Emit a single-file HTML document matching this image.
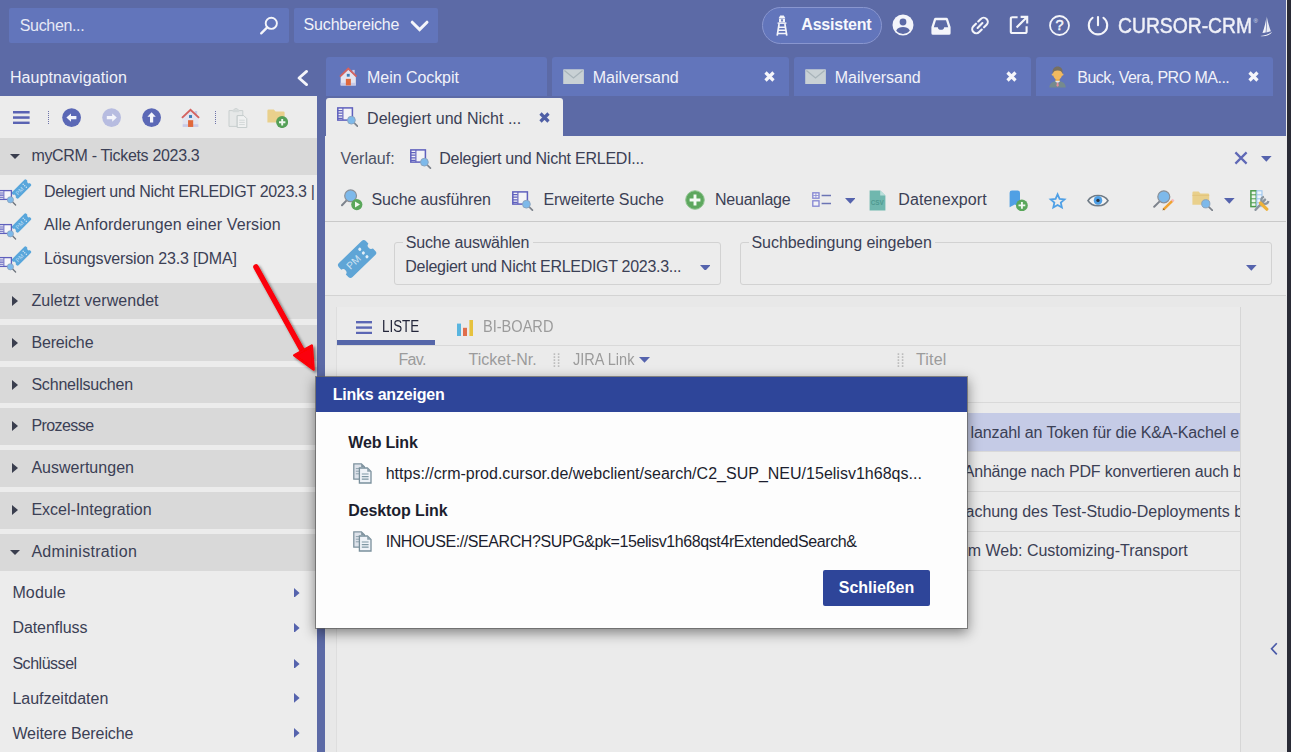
<!DOCTYPE html>
<html lang="de">
<head>
<meta charset="utf-8">
<title>CURSOR-CRM</title>
<style>
*{box-sizing:border-box;margin:0;padding:0}
html,body{width:1291px;height:752px;overflow:hidden}
body{position:relative;background:#5c6aa6;font-family:"Liberation Sans",sans-serif;font-size:16px;color:#3b4055}
.abs{position:absolute}
.t{position:absolute;white-space:nowrap;line-height:20px;height:20px}
.box{position:absolute;background:#6275bb;border-radius:2px}
.tab{position:absolute;top:57px;height:39px;background:#6275bb;border-radius:3px 3px 0 0}
#side{position:absolute;left:0;top:96px;width:317px;height:656px;background:#ececec}
.sh{position:absolute;left:0;width:317px;height:36.5px;background:#d9d9d9}
.tr{position:absolute;left:12.4px;width:0;height:0;border-left:6.2px solid #3a3e4e;border-top:5px solid transparent;border-bottom:5px solid transparent}
.td{position:absolute;left:9.6px;width:0;height:0;border-top:5.6px solid #3a3e4e;border-left:5px solid transparent;border-right:5px solid transparent}
.ar{position:absolute;left:294.2px;width:0;height:0;border-left:5.4px solid #5664ae;border-top:4.9px solid transparent;border-bottom:4.9px solid transparent}
#main{position:absolute;left:325px;top:136px;width:962px;height:616px;background:#ececec}
#lower{position:absolute;left:325px;top:296px;width:962px;height:456px;background:#e8e8e8}
#acttab{position:absolute;left:326px;top:98px;width:237px;height:39px;background:#ececec;border-radius:3px 3px 0 0}
.sep{position:absolute;left:325px;width:961px;height:1px;background:#c9c9c9}
.fs{position:absolute;border:1px solid #d2d2d2;border-radius:3px;top:242px;height:43px}
.lgbg{position:absolute;top:240px;height:6px;background:#ececec}
#list{position:absolute;left:336px;top:307px;width:905px;height:445px;background:#ebebeb;border-left:1px solid #dedede;border-right:1px solid #d6d6d6}
.hl{position:absolute;left:337px;width:903px;height:1px;background:#d9d9d9}
#dlg{position:absolute;left:316px;top:377px;width:651px;height:251px;background:#fdfdfd;box-shadow:0 0 0 1px rgba(95,95,95,.7),0 4px 12px 1px rgba(0,0,0,.45)}
#dlgh{position:absolute;left:316px;top:377px;width:651px;height:34.5px;background:#2e4599}
#btn{position:absolute;left:823px;top:569.5px;width:107px;height:36.5px;background:#2e4599;border-radius:2px}
</style>
</head>
<body>
<div class="box" style="left:9px;top:8px;width:280px;height:35px"></div>
<div class="t" style="left:19.8px;top:16px;font-size:16px;letter-spacing:-0.345px;color:#e6e9f6;">Suchen...</div>
<svg class="abs" style="left:259px;top:15px;" width="21" height="21" viewBox="0 0 21 21"><circle cx="12.3" cy="8.3" r="5.6" fill="none" stroke="#f4f5fa" stroke-width="1.9"/><path d="M8.2 12.4 L2.2 18.4" stroke="#f4f5fa" stroke-width="2.3" stroke-linecap="round"/></svg>
<div class="box" style="left:294px;top:8px;width:143.5px;height:35px"></div>
<div class="t" style="left:303.6px;top:15px;font-size:16px;letter-spacing:-0.179px;color:#f1f2f9;">Suchbereiche</div>
<svg class="abs" style="left:409px;top:18.6px;" width="21" height="14" viewBox="0 0 21 14"><path d="M3.2 3.2 L10.6 10.6 L18 3.2" fill="none" stroke="#f4f5fa" stroke-width="3" stroke-linecap="round" stroke-linejoin="miter"/></svg>
<div class="abs" style="left:762px;top:7px;width:120px;height:37px;border-radius:18.5px;background:#6275bb;border:1px solid #8996cf"></div>
<svg class="abs" style="left:774.6px;top:15.2px;" width="14" height="21" viewBox="0 0 14 21"><path d="M5.2 0.6 h3.6 l1.6 2.6 h-6.8z" fill="#f4f5fa"/><rect x="4" y="3.6" width="6" height="3.6" fill="#f4f5fa"/><rect x="2.6" y="7.4" width="8.8" height="1.5" fill="#f4f5fa"/><path d="M4.1 9 L2.2 20.6 M9.9 9 L11.8 20.6" stroke="#f4f5fa" stroke-width="1.7" fill="none"/><path d="M3.6 12.2 h6.8 M3.1 15.3 h7.8 M2.6 18.4 h8.8" stroke="#f4f5fa" stroke-width="1.5"/><rect x="6.1" y="4.3" width="1.8" height="2.2" fill="#6275bb"/></svg>
<div class="t" style="left:801.3px;top:15px;font-size:16px;letter-spacing:-0.203px;font-weight:bold;color:#f7f8fd;">Assistent</div>
<svg class="abs" style="left:891.5px;top:14.4px;" width="22" height="22" viewBox="0 0 22 22"><circle cx="11" cy="11" r="10.5" fill="#f4f5fa"/><circle cx="11" cy="8" r="3.4" fill="#5c6aa6"/><path d="M4.2 16.6 C5.6 13.6 8.2 12.9 11 12.9 C13.8 12.9 16.4 13.6 17.8 16.6 C16.2 18.7 13.8 19.9 11 19.9 C8.2 19.9 5.8 18.7 4.2 16.6z" fill="#5c6aa6"/></svg>
<svg class="abs" style="left:930.6px;top:16.6px;" width="20" height="19" viewBox="0 0 20 19"><path d="M4.6 0.8 h10.8 q1.2 0 1.6 1.1 l2.6 8.1 v6.2 q0 1.6 -1.6 1.6 h-16 q-1.6 0 -1.6 -1.6 v-6.2 l2.6 -8.1 q0.4 -1.1 1.6 -1.1z" fill="#f4f5fa"/><path d="M5 3.2 h10 l2.2 7 h-4 q-0.4 2.6 -3.2 2.6 q-2.8 0 -3.2 -2.6 h-4z" fill="#5c6aa6"/></svg>
<svg class="abs" style="left:970.3px;top:16px;" width="20" height="19" viewBox="0 0 20 19"><g transform="rotate(-45 10 9.5)" fill="none" stroke="#f4f5fa" stroke-width="2.1" stroke-linecap="round"><path d="M8.4 5.4 h-3.6 a4.1 4.1 0 0 0 0 8.2 h3.6"/><path d="M11.6 5.4 h3.6 a4.1 4.1 0 0 1 0 8.2 h-3.6"/><path d="M6.6 9.5 h6.8"/></g></svg>
<svg class="abs" style="left:1009.2px;top:15.2px;" width="21" height="21" viewBox="0 0 21 21"><path d="M8.6 2.2 h-5.2 q-1.6 0 -1.6 1.6 v12.6 q0 1.6 1.6 1.6 h12.6 q1.6 0 1.6 -1.6 v-5.2" fill="none" stroke="#f4f5fa" stroke-width="2.1"/><path d="M11.6 1.9 h6.6 v6.6 M17.8 2.3 L7.6 12.5" fill="none" stroke="#f4f5fa" stroke-width="2.1"/></svg>
<svg class="abs" style="left:1047.9px;top:14px;" width="23" height="23" viewBox="0 0 23 23"><circle cx="11.5" cy="11.5" r="9.5" fill="none" stroke="#f4f5fa" stroke-width="1.8"/><text x="11.5" y="16.4" text-anchor="middle" font-family="Liberation Sans, sans-serif" font-size="14.5" stroke="#f4f5fa" stroke-width="0.5" fill="#f4f5fa">?</text></svg>
<svg class="abs" style="left:1086.5px;top:13.8px;" width="22" height="23" viewBox="0 0 22 23"><path d="M5.59 3.76 A9.2 9.2 0 1 0 16.41 3.76" fill="none" stroke="#f4f5fa" stroke-width="2.1" stroke-linecap="round"/><path d="M11 3 V11.2" stroke="#f4f5fa" stroke-width="2.1" stroke-linecap="round"/></svg>
<div class="t" style="left:1118.0px;top:16px;font-size:21.6px;transform-origin:0 50%;transform:scaleX(0.8943);color:#f0f1f8;-webkit-text-stroke:0.45px #f0f1f8;">CURSOR-CRM</div>
<div class="t" style="left:1253.6px;top:14.5px;font-size:6px;color:#dfe2f1;line-height:12px;height:12px">®</div>
<svg class="abs" style="left:1260.2px;top:15.7px;" width="13" height="21.4" viewBox="0 0 13 21.4"><path d="M6.5 0.3 C5.8 6 4.6 11.4 2.5 16.9 L5.7 16.5 C6.1 11 6.4 5.6 6.5 0.3z" fill="#f4f5fa"/><path d="M6.9 1.2 C8 6.6 9.4 11.2 10.9 15.3 L6.4 16.4 C6.7 11 6.9 6.6 6.9 1.2z" fill="#f4f5fa" opacity="0.93"/><path d="M0.3 20.1 C4.6 19.5 9 18.1 12.3 15.7 C10.2 19.4 4.8 20.9 0.3 20.1z" fill="#f4f5fa"/></svg>
<div class="abs" style="left:1286px;top:0;width:1px;height:752px;background:#ececec"></div>
<div class="abs" style="left:1287px;top:0;width:4px;height:752px;background:#2a2b36"></div>
<div class="t" style="left:9.9px;top:68px;font-size:16px;letter-spacing:0.091px;color:#f1f2f9;">Hauptnavigation</div>
<svg class="abs" style="left:294px;top:68px;" width="17" height="20" viewBox="0 0 17 20"><path d="M12.6 3.4 L5 10 L12.6 16.6" fill="none" stroke="#f4f5fa" stroke-width="2.8" stroke-linecap="round" stroke-linejoin="round"/></svg>
<div class="tab" style="left:326px;width:221px"></div>
<div class="tab" style="left:552px;width:237px"></div>
<div class="tab" style="left:794px;width:237px"></div>
<div class="tab" style="left:1036px;width:237px"></div>
<svg class="abs" style="left:338.6px;top:67.0px;" width="18.72" height="20.28" viewBox="0 0 18 19.5"><rect x="12.8" y="2.8" width="2.3" height="4.4" fill="#c5c8e6"/><path d="M8.9 2.4 L1.6 9.2 V17.7 H16.2 V9.2z" fill="#e3e4f0"/><rect x="1.6" y="15.2" width="14.6" height="2.5" fill="#c8cae7"/><rect x="6.6" y="11.4" width="4.8" height="6.3" fill="#e0683c"/><rect x="7.5" y="6.6" width="2.8" height="2.7" fill="#3b7db8"/><path d="M0.9 9.2 L8.9 1.6 L16.9 9.2" fill="none" stroke="#d4625f" stroke-width="1.8" stroke-linejoin="miter"/></svg>
<div class="t" style="left:367.1px;top:68px;font-size:16px;letter-spacing:-0.065px;color:#f1f2f9;">Mein Cockpit</div>
<svg class="abs" style="left:563px;top:68.6px;" width="21.2" height="15.8" viewBox="0 0 21.2 15.8"><rect x="0.2" y="0.3" width="20.7" height="15.2" rx="0.6" fill="#c9d1d5"/><path d="M1.4 1.4 L10.5 9 L19.6 1.4" fill="none" stroke="#a8b4ba" stroke-width="1.3"/></svg>
<div class="t" style="left:592.8px;top:68px;font-size:16px;letter-spacing:-0.042px;color:#f1f2f9;">Mailversand</div>
<svg class="abs" style="left:764px;top:70.9px;" width="11" height="11" viewBox="0 0 11 11"><path d="M1.5 1.5 L9.5 9.5 M9.5 1.5 L1.5 9.5" stroke="#f6f6fa" stroke-width="3.2"/></svg>
<svg class="abs" style="left:805px;top:68.6px;" width="21.2" height="15.8" viewBox="0 0 21.2 15.8"><rect x="0.2" y="0.3" width="20.7" height="15.2" rx="0.6" fill="#c9d1d5"/><path d="M1.4 1.4 L10.5 9 L19.6 1.4" fill="none" stroke="#a8b4ba" stroke-width="1.3"/></svg>
<div class="t" style="left:834.8px;top:68px;font-size:16px;letter-spacing:-0.042px;color:#f1f2f9;">Mailversand</div>
<svg class="abs" style="left:1006px;top:70.9px;" width="11" height="11" viewBox="0 0 11 11"><path d="M1.5 1.5 L9.5 9.5 M9.5 1.5 L1.5 9.5" stroke="#f6f6fa" stroke-width="3.2"/></svg>
<svg class="abs" style="left:1049px;top:66.0px;" width="17.2" height="21.6" viewBox="0 0 17.2 21.6"><path d="M0.4 21.4 C0.6 17.4 3 15.9 6.2 15.2 L8.6 17 L11 15.2 C14.2 15.9 16.6 17.4 16.8 21.4z" fill="#758a8e"/><rect x="6.5" y="11.4" width="4.2" height="4" fill="#eca63a"/><path d="M6.2 15.2 L8.6 17.2 L11 15.2 L10.6 14.7 H6.6z" fill="#e4eaef"/><path d="M7.9 16.4 h1.4 l0.5 3.4 l-1.2 1 l-1.2 -1z" fill="#e48f99"/><circle cx="3.8" cy="8.6" r="1.1" fill="#f1b95f"/><circle cx="13.4" cy="8.6" r="1.1" fill="#f1b95f"/><ellipse cx="8.6" cy="8" rx="4.6" ry="5.5" fill="#f1b95f"/><path d="M3.7 7.6 C3 2.8 5.6 0.5 8.6 0.5 C11.8 0.5 14.2 2.8 13.5 7.6 C12.9 5.6 11.6 4.6 8.6 4.6 C5.8 4.6 4.3 5.6 3.7 7.6z" fill="#78705f"/></svg>
<div class="t" style="left:1077.3px;top:68px;font-size:16px;letter-spacing:-0.510px;color:#f1f2f9;">Buck, Vera, PRO MA...</div>
<svg class="abs" style="left:1248px;top:70.9px;" width="11" height="11" viewBox="0 0 11 11"><path d="M1.5 1.5 L9.5 9.5 M9.5 1.5 L1.5 9.5" stroke="#f6f6fa" stroke-width="3.2"/></svg>
<div id="acttab"></div>
<svg class="abs" style="left:336.6px;top:106.6px;" width="21.5" height="20.5" viewBox="0 0 21.5 20.5"><rect x="0.8" y="0.9" width="14.6" height="12.2" fill="#f3f3f6" stroke="#5f60bd" stroke-width="1.5"/><path d="M0.8 3.6 h4.8 M0.8 6.2 h4.8 M0.8 8.8 h4.8 M0.8 11.4 h4.8" stroke="#5f60bd" stroke-width="1.3"/><path d="M5.9 0.9 v12.2" stroke="#5f60bd" stroke-width="1.1"/><path d="M16.6 15.4 L20.4 19.2" stroke="#7d838c" stroke-width="1.7" stroke-linecap="round"/><circle cx="14.4" cy="13.2" r="3.9" fill="#7db9ea" stroke="#8aa2bb" stroke-width="0.9"/></svg>
<div class="t" style="left:367.1px;top:109px;font-size:16px;letter-spacing:0.015px;">Delegiert und Nicht ...</div>
<svg class="abs" style="left:539.3px;top:112px;" width="11" height="11" viewBox="0 0 11 11"><path d="M1.5 1.5 L9.5 9.5 M9.5 1.5 L1.5 9.5" stroke="#4f5fa5" stroke-width="3.2"/></svg>
<div id="side"></div>
<svg class="abs" style="left:13.1px;top:110.9px;" width="16.6" height="13.1" viewBox="0 0 16.6 13.1"><rect x="0" y="0.00" width="16.6" height="2.5" fill="#5a63b3"/><rect x="0" y="5.30" width="16.6" height="2.5" fill="#5a63b3"/><rect x="0" y="10.60" width="16.6" height="2.5" fill="#5a63b3"/></svg>
<svg class="abs" style="left:48px;top:110.8px;" width="1" height="13.4" viewBox="0 0 1 13.4"><path d="M0.5 0 V13.4" stroke="#6a70a8" stroke-width="1" stroke-dasharray="1 1"/></svg>
<svg class="abs" style="left:62px;top:108.2px;" width="19.2" height="19.2" viewBox="0 0 19.2 19.2"><circle cx="9.6" cy="9.6" r="9.4" fill="#5b68b6"/><path d="M4.4 9.6 L9 5.4 V8 H14.4 V11.2 H9 V13.8z" fill="#f4f5fb"/></svg>
<svg class="abs" style="left:102px;top:108.2px;" width="19.2" height="19.2" viewBox="0 0 19.2 19.2"><circle cx="9.6" cy="9.6" r="9.4" fill="#b7bce0"/><path d="M14.8 9.6 L10.2 5.4 V8 H4.8 V11.2 H10.2 V13.8z" fill="#f4f5fb"/></svg>
<svg class="abs" style="left:142px;top:108.2px;" width="19.2" height="19.2" viewBox="0 0 19.2 19.2"><circle cx="9.6" cy="9.6" r="9.4" fill="#5b68b6"/><path d="M9.6 4.2 L13.8 8.8 H11.2 V14.4 H8 V8.8 H5.4z" fill="#f4f5fb"/></svg>
<svg class="abs" style="left:181px;top:107.8px;" width="19.26" height="20.865000000000002" viewBox="0 0 18 19.5"><rect x="12.8" y="2.8" width="2.3" height="4.4" fill="#c5c8e6"/><path d="M8.9 2.4 L1.6 9.2 V17.7 H16.2 V9.2z" fill="#e3e4f0"/><rect x="1.6" y="15.2" width="14.6" height="2.5" fill="#c8cae7"/><rect x="6.6" y="11.4" width="4.8" height="6.3" fill="#e0683c"/><rect x="7.5" y="6.6" width="2.8" height="2.7" fill="#3b7db8"/><path d="M0.9 9.2 L8.9 1.6 L16.9 9.2" fill="none" stroke="#d4625f" stroke-width="1.8" stroke-linejoin="miter"/></svg>
<svg class="abs" style="left:215px;top:110.8px;" width="1" height="13.4" viewBox="0 0 1 13.4"><path d="M0.5 0 V13.4" stroke="#6a70a8" stroke-width="1" stroke-dasharray="1 1"/></svg>
<svg class="abs" style="left:228.4px;top:107.6px;" width="19.6" height="20.4" viewBox="0 0 19.6 20.4"><path d="M1 2.6 h4.6 q0.4 -2 2.4 -2 q2 0 2.4 2 h4.4 v5 h-5.6 v10.8 h-8.2z" fill="#e6e8e8" stroke="#c9cfcf" stroke-width="1"/><rect x="4.6" y="1.4" width="6.6" height="2.8" rx="0.8" fill="#d5dada"/><path d="M9.2 7.6 h6.6 l3 3 v9 h-9.6z" fill="#f0f1f1" stroke="#c4cbcb" stroke-width="1"/><path d="M11.2 12.2 h5.6 M11.2 14.4 h5.6 M11.2 16.6 h5.6" stroke="#cfd5d5" stroke-width="0.9"/></svg>
<svg class="abs" style="left:267px;top:108.8px;" width="21.2" height="19.2" viewBox="0 0 21.2 19.2"><path d="M0.4 1.8 q0 -1.2 1.2 -1.2 h5.2 l1.8 1.8 h7.8 q1.2 0 1.2 1.2 V13.6 H0.4z" fill="#e9d08c"/><circle cx="15.1" cy="13.1" r="6" fill="#55a058"/><path d="M15.2 10 V16.4 M12 13.2 H18.4" stroke="#f0f8f0" stroke-width="1.9"/></svg>
<div class="sh" style="top:138px;height:37px"></div>
<i class="td" style="top:153.6px"></i>
<div class="t" style="left:31.4px;top:146px;font-size:16px;letter-spacing:-0.325px;">myCRM - Tickets 2023.3</div>
<div class="sh" style="top:283px;height:36px"></div>
<i class="tr" style="top:296.2px"></i>
<div class="t" style="left:31.4px;top:291px;font-size:16px;letter-spacing:0.054px;">Zuletzt verwendet</div>
<div class="sh" style="top:325px;height:36px"></div>
<i class="tr" style="top:338.2px"></i>
<div class="t" style="left:31.4px;top:333px;font-size:16px;letter-spacing:-0.145px;">Bereiche</div>
<div class="sh" style="top:367px;height:36px"></div>
<i class="tr" style="top:380.2px"></i>
<div class="t" style="left:31.4px;top:375px;font-size:16px;letter-spacing:-0.191px;">Schnellsuchen</div>
<div class="sh" style="top:408px;height:37px"></div>
<i class="tr" style="top:421.2px"></i>
<div class="t" style="left:31.4px;top:416px;font-size:16px;letter-spacing:-0.563px;">Prozesse</div>
<div class="sh" style="top:450px;height:37px"></div>
<i class="tr" style="top:463.2px"></i>
<div class="t" style="left:31.4px;top:458px;font-size:16px;letter-spacing:0.025px;">Auswertungen</div>
<div class="sh" style="top:492px;height:37px"></div>
<i class="tr" style="top:505.2px"></i>
<div class="t" style="left:31.4px;top:500px;font-size:16px;letter-spacing:0.008px;">Excel-Integration</div>
<div class="sh" style="top:534px;height:37px"></div>
<i class="td" style="top:549.6px"></i>
<div class="t" style="left:31.4px;top:542px;font-size:16px;letter-spacing:0.309px;">Administration</div>
<svg class="abs" style="left:0px;top:179.2px;" width="33" height="28" viewBox="0 0 33 28"><g transform="translate(21.5,10) rotate(-45)"><rect x="-10" y="-4.5" width="20" height="9" rx="1.4" fill="#58a6db"/><circle cx="-10.4" cy="0" r="1.7" fill="#ececec"/><circle cx="10.4" cy="0" r="1.7" fill="#ececec"/><text x="-2.6" y="2.1" text-anchor="middle" font-family="Liberation Sans, sans-serif" font-size="5.8" fill="#bcdcf3">PM</text><circle cx="4.6" cy="-2.2" r="0.65" fill="#d8e9f5"/><circle cx="4.6" cy="0" r="0.65" fill="#d8e9f5"/><circle cx="4.6" cy="2.2" r="0.65" fill="#d8e9f5"/></g><rect x="-0.6" y="11.6" width="12" height="8.8" fill="#f6f6f9" stroke="#5f60bd" stroke-width="1.3"/><path d="M-0.6 14 h4.2 M-0.6 16.1 h4.2 M-0.6 18.2 h4.2" stroke="#5f60bd" stroke-width="1.1"/><path d="M3.9 11.6 v8.8" stroke="#5f60bd" stroke-width="0.9"/><path d="M12.4 22.8 L15.6 26" stroke="#6d737c" stroke-width="1.3" stroke-linecap="round"/><circle cx="10.4" cy="20.8" r="3.1" fill="#7db9ea" stroke="#8aa2bb" stroke-width="0.8"/></svg>
<div class="t" style="left:44.0px;top:182px;font-size:16px;letter-spacing:-0.312px;">Delegiert und Nicht ERLEDIGT 2023.3 |</div>
<svg class="abs" style="left:0px;top:212.6px;" width="33" height="28" viewBox="0 0 33 28"><g transform="translate(21.5,10) rotate(-45)"><rect x="-10" y="-4.5" width="20" height="9" rx="1.4" fill="#58a6db"/><circle cx="-10.4" cy="0" r="1.7" fill="#ececec"/><circle cx="10.4" cy="0" r="1.7" fill="#ececec"/><text x="-2.6" y="2.1" text-anchor="middle" font-family="Liberation Sans, sans-serif" font-size="5.8" fill="#bcdcf3">PM</text><circle cx="4.6" cy="-2.2" r="0.65" fill="#d8e9f5"/><circle cx="4.6" cy="0" r="0.65" fill="#d8e9f5"/><circle cx="4.6" cy="2.2" r="0.65" fill="#d8e9f5"/></g><rect x="-0.6" y="11.6" width="12" height="8.8" fill="#f6f6f9" stroke="#5f60bd" stroke-width="1.3"/><path d="M-0.6 14 h4.2 M-0.6 16.1 h4.2 M-0.6 18.2 h4.2" stroke="#5f60bd" stroke-width="1.1"/><path d="M3.9 11.6 v8.8" stroke="#5f60bd" stroke-width="0.9"/><path d="M12.4 22.8 L15.6 26" stroke="#6d737c" stroke-width="1.3" stroke-linecap="round"/><circle cx="10.4" cy="20.8" r="3.1" fill="#7db9ea" stroke="#8aa2bb" stroke-width="0.8"/></svg>
<div class="t" style="left:44.0px;top:215px;font-size:16px;letter-spacing:0.089px;">Alle Anforderungen einer Version</div>
<svg class="abs" style="left:0px;top:246.4px;" width="33" height="28" viewBox="0 0 33 28"><g transform="translate(21.5,10) rotate(-45)"><rect x="-10" y="-4.5" width="20" height="9" rx="1.4" fill="#58a6db"/><circle cx="-10.4" cy="0" r="1.7" fill="#ececec"/><circle cx="10.4" cy="0" r="1.7" fill="#ececec"/><text x="-2.6" y="2.1" text-anchor="middle" font-family="Liberation Sans, sans-serif" font-size="5.8" fill="#bcdcf3">PM</text><circle cx="4.6" cy="-2.2" r="0.65" fill="#d8e9f5"/><circle cx="4.6" cy="0" r="0.65" fill="#d8e9f5"/><circle cx="4.6" cy="2.2" r="0.65" fill="#d8e9f5"/></g><rect x="-0.6" y="11.6" width="12" height="8.8" fill="#f6f6f9" stroke="#5f60bd" stroke-width="1.3"/><path d="M-0.6 14 h4.2 M-0.6 16.1 h4.2 M-0.6 18.2 h4.2" stroke="#5f60bd" stroke-width="1.1"/><path d="M3.9 11.6 v8.8" stroke="#5f60bd" stroke-width="0.9"/><path d="M12.4 22.8 L15.6 26" stroke="#6d737c" stroke-width="1.3" stroke-linecap="round"/><circle cx="10.4" cy="20.8" r="3.1" fill="#7db9ea" stroke="#8aa2bb" stroke-width="0.8"/></svg>
<div class="t" style="left:44.0px;top:249px;font-size:16px;letter-spacing:-0.154px;">Lösungsversion 23.3 [DMA]</div>
<div class="t" style="left:12.4px;top:583px;font-size:16px;letter-spacing:0.153px;">Module</div>
<svg class="abs" style="left:294.2px;top:587.7px;" width="5.6" height="9.8" viewBox="0 0 5.6 9.8"><path d="M0 0 L5.6 4.9 L0 9.8z" fill="#5563ad"/></svg>
<div class="t" style="left:12.4px;top:618px;font-size:16px;letter-spacing:-0.059px;">Datenfluss</div>
<svg class="abs" style="left:294.2px;top:622.5px;" width="5.6" height="9.8" viewBox="0 0 5.6 9.8"><path d="M0 0 L5.6 4.9 L0 9.8z" fill="#5563ad"/></svg>
<div class="t" style="left:12.4px;top:654px;font-size:16px;letter-spacing:-0.465px;">Schlüssel</div>
<svg class="abs" style="left:294.2px;top:658.5px;" width="5.6" height="9.8" viewBox="0 0 5.6 9.8"><path d="M0 0 L5.6 4.9 L0 9.8z" fill="#5563ad"/></svg>
<div class="t" style="left:12.4px;top:689px;font-size:16px;letter-spacing:-0.014px;">Laufzeitdaten</div>
<svg class="abs" style="left:294.2px;top:693.3px;" width="5.6" height="9.8" viewBox="0 0 5.6 9.8"><path d="M0 0 L5.6 4.9 L0 9.8z" fill="#5563ad"/></svg>
<div class="t" style="left:12.4px;top:724px;font-size:16px;letter-spacing:-0.090px;">Weitere Bereiche</div>
<svg class="abs" style="left:294.2px;top:728.2px;" width="5.6" height="9.8" viewBox="0 0 5.6 9.8"><path d="M0 0 L5.6 4.9 L0 9.8z" fill="#5563ad"/></svg>
<div id="main"></div><div id="lower"></div>
<div class="t" style="left:340.4px;top:149px;font-size:16px;color:#4d5266;">Verlauf:</div>
<svg class="abs" style="left:410.4px;top:148.8px;" width="21.5" height="20.5" viewBox="0 0 21.5 20.5"><rect x="0.8" y="0.9" width="14.6" height="12.2" fill="#f3f3f6" stroke="#5f60bd" stroke-width="1.5"/><path d="M0.8 3.6 h4.8 M0.8 6.2 h4.8 M0.8 8.8 h4.8 M0.8 11.4 h4.8" stroke="#5f60bd" stroke-width="1.3"/><path d="M5.9 0.9 v12.2" stroke="#5f60bd" stroke-width="1.1"/><path d="M16.6 15.4 L20.4 19.2" stroke="#7d838c" stroke-width="1.7" stroke-linecap="round"/><circle cx="14.4" cy="13.2" r="3.9" fill="#7db9ea" stroke="#8aa2bb" stroke-width="0.9"/></svg>
<div class="t" style="left:439.3px;top:149px;font-size:16px;letter-spacing:-0.240px;">Delegiert und Nicht ERLEDI...</div>
<svg class="abs" style="left:1234.4px;top:151.2px;" width="14" height="14" viewBox="0 0 14 14"><path d="M1.4 1.4 L12.6 12.6 M12.6 1.4 L1.4 12.6" stroke="#5f68b6" stroke-width="2.2"/></svg>
<svg class="abs" style="left:1261.4px;top:155.8px;" width="10.6" height="5.8" viewBox="0 0 10.6 5.8"><path d="M0 0 H10.6 L5.3 5.8z" fill="#5563ad"/></svg>
<svg class="abs" style="left:340.6px;top:189.4px;" width="22" height="21.5" viewBox="0 0 22 21.5"><path d="M5.6 11.4 L1 16.2" stroke="#7d838c" stroke-width="2" stroke-linecap="round"/><circle cx="9.6" cy="6.8" r="5.9" fill="#7db9ea" stroke="#8a9098" stroke-width="1.2"/><circle cx="15.8" cy="15.6" r="5.6" fill="#5aa75b"/><path d="M14 12.6 L19 15.6 L14 18.6z" fill="#f2f8f2"/></svg>
<div class="t" style="left:371.4px;top:190px;font-size:16px;letter-spacing:-0.106px;">Suche ausführen</div>
<svg class="abs" style="left:512px;top:190.6px;" width="21.5" height="20.5" viewBox="0 0 21.5 20.5"><rect x="0.8" y="0.9" width="14.6" height="12.2" fill="#f3f3f6" stroke="#5f60bd" stroke-width="1.5"/><path d="M0.8 3.6 h4.8 M0.8 6.2 h4.8 M0.8 8.8 h4.8 M0.8 11.4 h4.8" stroke="#5f60bd" stroke-width="1.3"/><path d="M5.9 0.9 v12.2" stroke="#5f60bd" stroke-width="1.1"/><path d="M16.6 15.4 L20.4 19.2" stroke="#7d838c" stroke-width="1.7" stroke-linecap="round"/><circle cx="14.4" cy="13.2" r="3.9" fill="#7db9ea" stroke="#8aa2bb" stroke-width="0.9"/></svg>
<div class="t" style="left:543.4px;top:190px;font-size:16px;letter-spacing:-0.090px;">Erweiterte Suche</div>
<svg class="abs" style="left:684.6px;top:190.4px;" width="20" height="20" viewBox="0 0 20 20"><circle cx="10" cy="10" r="9.3" fill="#5da75e" stroke="#93c693" stroke-width="1"/><path d="M10 4.6 V15.4 M4.6 10 H15.4" stroke="#f4faf4" stroke-width="2.9"/></svg>
<div class="t" style="left:714.9px;top:190px;font-size:16px;letter-spacing:-0.201px;">Neuanlage</div>
<svg class="abs" style="left:811.6px;top:192.4px;" width="20" height="15.5" viewBox="0 0 20 15.5"><rect x="0.8" y="0.8" width="6.2" height="5.4" fill="#f3f3f6" stroke="#8385d2" stroke-width="1.3"/><rect x="0.8" y="8.8" width="6.2" height="5.4" fill="#f3f3f6" stroke="#8385d2" stroke-width="1.3"/><path d="M3.9 1.2 v4.6 M1.2 3.5 h5.4" stroke="#8385d2" stroke-width="0.8"/><path d="M9.6 3.4 h9.4 M9.6 11.4 h9.4" stroke="#6b74b4" stroke-width="1.5"/></svg>
<svg class="abs" style="left:844.6px;top:197.8px;" width="10.6" height="5.8" viewBox="0 0 10.6 5.8"><path d="M0 0 H10.6 L5.3 5.8z" fill="#5563ad"/></svg>
<svg class="abs" style="left:869.2px;top:190px;" width="17" height="21" viewBox="0 0 17 21"><path d="M0.6 0.4 H11.2 L16.4 5.6 V20.6 H0.6z" fill="#70b7ae"/><path d="M11.2 0.4 V5.6 H16.4z" fill="#b9e0db"/><text x="8.3" y="14.6" text-anchor="middle" font-family="Liberation Sans, sans-serif" font-size="6.4" font-weight="bold" fill="#4f9990">CSV</text></svg>
<div class="t" style="left:898.3px;top:190px;font-size:16px;letter-spacing:0.130px;">Datenexport</div>
<svg class="abs" style="left:1009.4px;top:189.8px;" width="19.5" height="21.6" viewBox="0 0 19.5 21.6"><path d="M0.6 2.8 q0 -2.4 2.4 -2.4 h5.6 q2.4 0 2.4 2.4 V17.2 L5.8 14.4 L0.6 17.2z" fill="#50a0e4"/><circle cx="12.9" cy="15.4" r="5.9" fill="#5aa75b"/><path d="M12.9 12 V18.8 M9.5 15.4 H16.3" stroke="#f0f8f0" stroke-width="1.9"/></svg>
<svg class="abs" style="left:1047.8px;top:191.4px;" width="19.2" height="19" viewBox="0 0 19.2 19"><polygon points="9.60,3.30 11.60,7.85 16.54,8.34 12.83,11.65 13.89,16.51 9.60,14.00 5.31,16.51 6.37,11.65 2.66,8.34 7.60,7.85" fill="none" stroke="#4fa0e6" stroke-width="1.8" stroke-linejoin="miter"/></svg>
<svg class="abs" style="left:1086.6px;top:193.2px;" width="22" height="15.2" viewBox="0 0 22 15.2"><path d="M1 7.6 C5 0.8 17 0.8 21 7.6 C17 14.4 5 14.4 1 7.6z" fill="#f4f4f4" stroke="#6f7b86" stroke-width="1.7"/><circle cx="11" cy="7.4" r="4.3" fill="#4fa0e6"/><circle cx="11" cy="7.4" r="1.7" fill="#2c3440"/></svg>
<svg class="abs" style="left:1152.6px;top:189.6px;" width="22" height="21.4" viewBox="0 0 22 21.4"><path d="M6.4 11.6 L1.2 16.8" stroke="#7d838c" stroke-width="2" stroke-linecap="round"/><circle cx="10.8" cy="6.8" r="6" fill="#7db9ea" stroke="#8a9098" stroke-width="1.2"/><path d="M10.4 19.6 L19.6 10.6" stroke="#f0a332" stroke-width="2.6" stroke-linecap="butt"/><path d="M19 11.2 L20.6 9.6" stroke="#f4b7c0" stroke-width="2.6"/><path d="M9.4 20.6 L10.4 18.2 L11.8 19.6z" fill="#8b6a3a"/></svg>
<svg class="abs" style="left:1191.8px;top:190.6px;" width="21.6" height="20.6" viewBox="0 0 21.6 20.6"><path d="M0.4 1.8 q0 -1.2 1.2 -1.2 h5 l1.8 1.8 h7.6 q1.2 0 1.2 1.2 V13.8 H0.4z" fill="#e9d08c"/><path d="M0.4 4.4 h16.8" stroke="#dfc27a" stroke-width="0.8"/><path d="M16.2 15.4 L20.6 19.6" stroke="#7d838c" stroke-width="1.7" stroke-linecap="round"/><circle cx="13.8" cy="12.8" r="4.1" fill="#7db9ea" stroke="#8aa2bb" stroke-width="1"/></svg>
<svg class="abs" style="left:1224.4px;top:197.9px;" width="10.6" height="5.8" viewBox="0 0 10.6 5.8"><path d="M0 0 H10.6 L5.3 5.8z" fill="#5563ad"/></svg>
<svg class="abs" style="left:1249.6px;top:189.6px;" width="20.4" height="21.6" viewBox="0 0 20.4 21.6"><rect x="0.9" y="0.8" width="5.4" height="15.8" fill="#eef6ee" stroke="#4b9b4c" stroke-width="1.5"/><path d="M0.9 4.8 h5.4 M0.9 8.8 h5.4 M0.9 12.8 h5.4" stroke="#4b9b4c" stroke-width="1"/><rect x="6.8" y="0.8" width="5.2" height="15.8" fill="#eef4fb" stroke="#9cc6ee" stroke-width="1.1"/><path d="M6.8 4.8 h5.2 M6.8 8.8 h5.2 M6.8 12.8 h5.2" stroke="#9cc6ee" stroke-width="1"/><path d="M5.6 19.8 L15 9.6" stroke="#8b959e" stroke-width="2.4" stroke-linecap="round"/><path d="M14 6.8 a3.6 3.6 0 1 0 4.4 4.2" fill="none" stroke="#8b959e" stroke-width="2.2"/><path d="M10.4 13 L16.8 19.2" stroke="#eeb23a" stroke-width="3.2" stroke-linecap="round"/></svg>
<div class="sep" style="top:221px"></div>
<svg class="abs" style="left:330px;top:232.7px;" width="54" height="52" viewBox="0 0 54 52"><g transform="translate(27.1,26.05) rotate(-44)"><rect x="-18.8" y="-9.8" width="37.6" height="19.6" rx="3" fill="#5fa5d6"/><circle cx="-19.4" cy="0" r="3.3" fill="#ececec"/><circle cx="19.4" cy="0" r="3.3" fill="#ececec"/><circle cx="8.7" cy="-5.2" r="1.55" fill="#e3eff8"/><circle cx="8.7" cy="0" r="1.55" fill="#e3eff8"/><circle cx="8.7" cy="5.2" r="1.55" fill="#e3eff8"/><text x="-4.6" y="3.3" text-anchor="middle" font-family="Liberation Sans, sans-serif" font-size="10.2" fill="#cfe3f2">PM</text></g></svg>
<div class="fs" style="left:394px;width:327px"></div><div class="lgbg" style="left:403px;width:130px"></div>
<div class="t" style="left:405.8px;top:233px;font-size:16px;letter-spacing:-0.188px;">Suche auswählen</div>
<div class="t" style="left:405.3px;top:257px;font-size:16px;letter-spacing:-0.289px;">Delegiert und Nicht ERLEDIGT 2023.3...</div>
<svg class="abs" style="left:699.6px;top:264.7px;" width="10.6" height="5.8" viewBox="0 0 10.6 5.8"><path d="M0 0 H10.6 L5.3 5.8z" fill="#5563ad"/></svg>
<div class="fs" style="left:740px;width:532px"></div><div class="lgbg" style="left:749px;width:186px"></div>
<div class="t" style="left:751.5px;top:233px;font-size:16px;letter-spacing:-0.055px;">Suchbedingung eingeben</div>
<svg class="abs" style="left:1246px;top:264.8px;" width="10.6" height="5.8" viewBox="0 0 10.6 5.8"><path d="M0 0 H10.6 L5.3 5.8z" fill="#5563ad"/></svg>
<div class="sep" style="top:295px;background:#d3d3d3"></div>
<div id="list"></div>
<svg class="abs" style="left:355.8px;top:320.9px;" width="16.6" height="13.200000000000001" viewBox="0 0 16.6 13.200000000000001"><rect x="0" y="0.00" width="16.6" height="2.4" fill="#5b66b4"/><rect x="0" y="5.40" width="16.6" height="2.4" fill="#5b66b4"/><rect x="0" y="10.80" width="16.6" height="2.4" fill="#5b66b4"/></svg>
<div class="t" style="left:381.8px;top:317px;font-size:16px;transform-origin:0 50%;transform:scaleX(0.8365);color:#23263a;">LISTE</div>
<svg class="abs" style="left:456.6px;top:319.6px;" width="16.8" height="16.2" viewBox="0 0 16.8 16.2"><rect x="0" y="3.6" width="4" height="12.6" fill="#59b5df"/><rect x="6" y="7.8" width="4" height="8.4" fill="#e06e4c"/><rect x="12.4" y="0" width="4.2" height="16.2" fill="#e6c23e"/></svg>
<div class="t" style="left:482.9px;top:317px;font-size:16px;transform-origin:0 50%;transform:scaleX(0.9102);color:#9b9b9b;">BI-BOARD</div>
<div class="abs" style="left:337px;top:340px;width:98px;height:4.6px;background:#5566a9"></div>
<div class="hl" style="top:345px"></div>
<div class="t" style="left:398.4px;top:350px;font-size:16px;letter-spacing:-0.659px;color:#9b9b9b;">Fav.</div>
<div class="t" style="left:468.5px;top:350px;font-size:16px;letter-spacing:0.034px;color:#9b9b9b;">Ticket-Nr.</div>
<svg class="abs" style="left:552.8px;top:352.8px;" width="7" height="14.4" viewBox="0 0 7 14.4"><rect x="0.6" y="0.3" width="1.6" height="1.6" fill="#b9b9b9"/><rect x="4.8" y="0.3" width="1.6" height="1.6" fill="#b9b9b9"/><rect x="0.6" y="3.3" width="1.6" height="1.6" fill="#b9b9b9"/><rect x="4.8" y="3.3" width="1.6" height="1.6" fill="#b9b9b9"/><rect x="0.6" y="6.3" width="1.6" height="1.6" fill="#b9b9b9"/><rect x="4.8" y="6.3" width="1.6" height="1.6" fill="#b9b9b9"/><rect x="0.6" y="9.3" width="1.6" height="1.6" fill="#b9b9b9"/><rect x="4.8" y="9.3" width="1.6" height="1.6" fill="#b9b9b9"/><rect x="0.6" y="12.3" width="1.6" height="1.6" fill="#b9b9b9"/><rect x="4.8" y="12.3" width="1.6" height="1.6" fill="#b9b9b9"/></svg>
<div class="t" style="left:572.7px;top:350px;font-size:16px;transform-origin:0 50%;transform:scaleX(0.9084);color:#9b9b9b;">JIRA Link</div>
<svg class="abs" style="left:638.8px;top:356.8px;" width="11" height="5.8" viewBox="0 0 11 5.8"><path d="M0 0 H11 L5.5 5.8z" fill="#5563ad"/></svg>
<svg class="abs" style="left:896.8px;top:352.8px;" width="7" height="14.4" viewBox="0 0 7 14.4"><rect x="0.6" y="0.3" width="1.6" height="1.6" fill="#b9b9b9"/><rect x="4.8" y="0.3" width="1.6" height="1.6" fill="#b9b9b9"/><rect x="0.6" y="3.3" width="1.6" height="1.6" fill="#b9b9b9"/><rect x="4.8" y="3.3" width="1.6" height="1.6" fill="#b9b9b9"/><rect x="0.6" y="6.3" width="1.6" height="1.6" fill="#b9b9b9"/><rect x="4.8" y="6.3" width="1.6" height="1.6" fill="#b9b9b9"/><rect x="0.6" y="9.3" width="1.6" height="1.6" fill="#b9b9b9"/><rect x="4.8" y="9.3" width="1.6" height="1.6" fill="#b9b9b9"/><rect x="0.6" y="12.3" width="1.6" height="1.6" fill="#b9b9b9"/><rect x="4.8" y="12.3" width="1.6" height="1.6" fill="#b9b9b9"/></svg>
<div class="t" style="left:916.0px;top:350px;font-size:16px;letter-spacing:0.152px;color:#9b9b9b;">Titel</div>
<div class="hl" style="top:402px"></div>
<div class="abs" style="left:338px;top:413px;width:902px;height:38px;background:#c5cbe6"></div>
<div class="hl" style="top:451px"></div>
<div class="hl" style="top:491px"></div>
<div class="hl" style="top:530.6px"></div>
<div class="hl" style="top:570px"></div>
<div class="abs" style="left:960px;top:410px;width:280px;height:160px;overflow:hidden">
<div class="t" style="left:10.6px;top:13px;font-size:16px;letter-spacing:-0.118px;">lanzahl an Token für die K&amp;A-Kachel e</div>
<div class="t" style="left:3.7px;top:52px;font-size:16px;letter-spacing:-0.181px;">Anhänge nach PDF konvertieren auch b</div>
<div class="t" style="left:5.6px;top:92px;font-size:16px;letter-spacing:-0.044px;">achung des Test-Studio-Deployments b</div>
<div class="t" style="left:7.8px;top:131px;font-size:16px;letter-spacing:-0.022px;">m Web: Customizing-Transport</div>
</div>
<svg class="abs" style="left:1270px;top:642.2px;" width="8.4" height="13.6" viewBox="0 0 8.4 13.6"><path d="M6.8 1.2 L1.6 6.8 L6.8 12.4" fill="none" stroke="#4a5aa8" stroke-width="1.7"/></svg>
<div id="dlg"></div><div id="dlgh"></div>
<div class="t" style="left:332.7px;top:385px;font-size:16px;letter-spacing:-0.207px;font-weight:bold;color:#ffffff;">Links anzeigen</div>
<div class="t" style="left:348.3px;top:433px;font-size:16px;letter-spacing:-0.191px;font-weight:bold;color:#1c1e2e;">Web Link</div>
<svg class="abs" style="left:353px;top:462.8px;" width="19" height="21" viewBox="0 0 19 21"><path d="M0.8 0.8 h7.6 l3 3 v12.4 h-10.6z" fill="#dde2ea" stroke="#7f939f" stroke-width="1.3"/><path d="M8.2 0.8 v3.2 h3.2z" fill="#7f939f"/><path d="M2.8 5.6 h4 M2.8 8.2 h4 M2.8 10.8 h4" stroke="#8fa3ad" stroke-width="1"/><path d="M6.4 5 h8 l3.6 3.6 v11.4 h-11.6z" fill="#eff3f8" stroke="#7a909c" stroke-width="1.3"/><path d="M14.2 5 v3.8 h3.8z" fill="#8ea2ad"/><path d="M8.8 11 h6.8 M8.8 13.6 h6.8 M8.8 16.2 h6.8" stroke="#7f97a3" stroke-width="1.2"/></svg>
<div class="t" style="left:385.7px;top:464px;font-size:16px;letter-spacing:0.012px;color:#1c1e2e;">https://crm-prod.cursor.de/webclient/search/C2_SUP_NEU/15elisv1h68qs...</div>
<div class="t" style="left:348.3px;top:501px;font-size:16px;letter-spacing:-0.106px;font-weight:bold;color:#1c1e2e;">Desktop Link</div>
<svg class="abs" style="left:353px;top:530.6px;" width="19" height="21" viewBox="0 0 19 21"><path d="M0.8 0.8 h7.6 l3 3 v12.4 h-10.6z" fill="#dde2ea" stroke="#7f939f" stroke-width="1.3"/><path d="M8.2 0.8 v3.2 h3.2z" fill="#7f939f"/><path d="M2.8 5.6 h4 M2.8 8.2 h4 M2.8 10.8 h4" stroke="#8fa3ad" stroke-width="1"/><path d="M6.4 5 h8 l3.6 3.6 v11.4 h-11.6z" fill="#eff3f8" stroke="#7a909c" stroke-width="1.3"/><path d="M14.2 5 v3.8 h3.8z" fill="#8ea2ad"/><path d="M8.8 11 h6.8 M8.8 13.6 h6.8 M8.8 16.2 h6.8" stroke="#7f97a3" stroke-width="1.2"/></svg>
<div class="t" style="left:385.7px;top:532px;font-size:16px;letter-spacing:-0.413px;color:#1c1e2e;">INHOUSE://SEARCH?SUPG&amp;pk=15elisv1h68qst4rExtendedSearch&amp;</div>
<div id="btn"></div>
<div class="t" style="left:838.8px;top:578px;font-size:16px;letter-spacing:-0.020px;font-weight:bold;color:#ffffff;">Schließen</div>
<svg class="abs" style="left:240px;top:250px;" width="100" height="140" viewBox="0 0 100 140"><defs><filter id="ash" x="-30%" y="-30%" width="160%" height="160%"><feGaussianBlur in="SourceAlpha" stdDeviation="1.6"/><feOffset dx="1.5" dy="2" result="o"/><feComponentTransfer><feFuncA type="linear" slope="0.5"/></feComponentTransfer><feMerge><feMergeNode/><feMergeNode in="SourceGraphic"/></feMerge></filter></defs><g filter="url(#ash)"><path d="M16 17 L62 100" stroke="#fb0207" stroke-width="5.6" stroke-linecap="round"/><path d="M73.6 119.6 L54.2 105.4 L71.8 95.6z" fill="#fb0207" stroke="#fb0207" stroke-width="2.4" stroke-linejoin="round"/></g></svg>
</body>
</html>
